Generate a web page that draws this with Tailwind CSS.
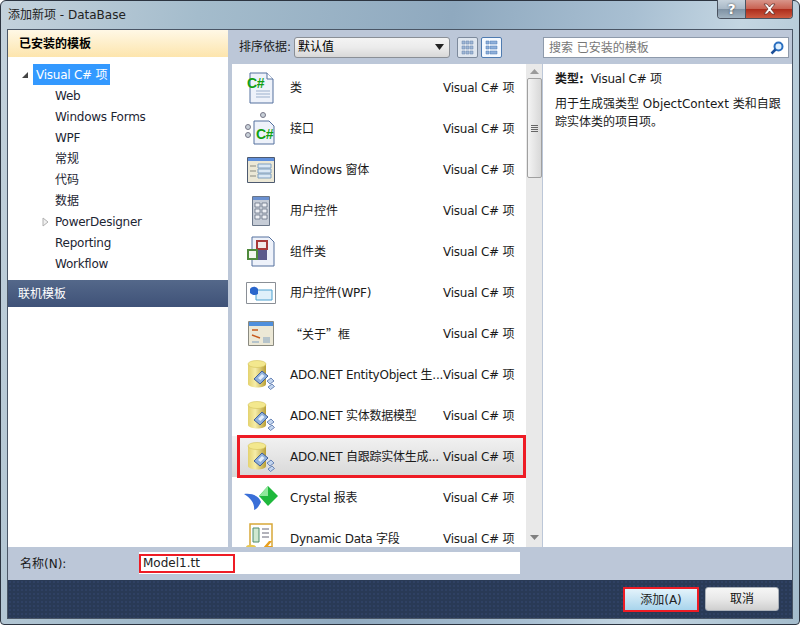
<!DOCTYPE html>
<html lang="zh">
<head>
  <meta charset="UTF-8" />
  <title>添加新项 - DataBase</title>
  <script src="https://cdn.jsdelivr.net/npm/@tailwindcss/browser@4"></script>
</head>
<body class="m-0 overflow-hidden bg-white">

  <svg class="absolute w-0 h-0">
    <defs>
      <linearGradient id="can" x1="0" x2="1" y1="0" y2="0">
        <stop offset="0" stop-color="#e4d26e"/><stop offset=".4" stop-color="#f6eda8"/><stop offset="1" stop-color="#b89e36"/>
      </linearGradient>
    </defs>
    <symbol id="db" viewBox="0 0 32 32">
      <path d="M2 5v20c0 2 4 3.500 9 3.500s9-1.500 9-3.500V5z" fill="url(#can)"/>
      <ellipse cx="11" cy="5" rx="9" ry="3.500" fill="#f3e88e" stroke="#d4c25a" stroke-width=".6"/>
      <path d="M8 20l8-8 6 5-8 8z" fill="#8fb0dc" stroke="#3f5f9c" stroke-width="1"/>
      <path d="M12 19l4-4 2.500 2-4 4z" fill="#e4eefa"/>
      <path d="M21 22l4-3 3 3-4 3zM22 28l4-3 2.500 2.500-4 3z" fill="#c3d5ee" stroke="#4f6fa8" stroke-width=".8"/>
    </symbol>
  </svg>

  <!-- Window -->
  <div class="w-[800px] h-[625px] flex flex-col rounded-t-[6px] rounded-b-[4px] border border-[#2c3440] bg-[linear-gradient(100deg,#c4d2dc_0%,#a4bccc_22%,#8fa9bf_50%,#a8bfd2_70%,#c4d6e2_82%,#a4bccc_100%)] font-['DejaVu_Sans','Noto_Sans_CJK_SC',sans-serif] text-[12px] tracking-[-0.25px] text-[#1a1a1a] relative">

    <!-- Title bar -->
    <div class="h-[28px] flex items-start justify-between pl-[7px] pr-[6px] shrink-0">
      <div class="pt-[5px] leading-[18px] text-[#222] tracking-normal">添加新项 - DataBase</div>
      <div class="flex h-[19px] -mt-px rounded-b-[4px] border border-t-0 border-[#4a5360] overflow-hidden">
        <div class="w-[28px] flex items-center justify-center border-r border-[#4a5360] bg-[linear-gradient(#c6d2dc,#a8b8c6_50%,#7f92a4_52%,#a0b2c0)] text-white font-bold text-[14px] leading-none [text-shadow:0_0_2px_#333]">?</div>
        <div class="w-[46px] flex items-center justify-center bg-[linear-gradient(#d8958a,#c8604f_50%,#ad2d1c_52%,#cc5a40)]">
          <svg width="15" height="12" viewBox="0 0 15 12"><path d="M2 1h3l2.500 3L10 1h3L9 6l4 5h-3L7.500 8 5 11H2l4-5z" fill="#fff" stroke="#5a2a24" stroke-width=".7"/></svg>
        </div>
      </div>
    </div>

    <!-- Dialog client area -->
    <div class="mx-[6px] h-[590px] flex flex-col border border-[#4a5666] bg-[#bcc7d8]">
      <div class="flex h-[517px] shrink-0">

        <!-- Left panel -->
        <div class="w-[220px] shrink-0 bg-white flex flex-col">
          <div class="h-[27px] pl-[11px] flex items-center font-bold text-[12px] tracking-normal bg-[linear-gradient(#fff8e6,#fde5ad)] text-black">已安装的模板</div>
          <div class="h-[223px] pt-[7px] text-[#1d2533]">
            <div class="h-[21px] flex items-center pl-[13px]">
              <svg width="8" height="8" viewBox="0 0 8 8" class="mr-[4px]"><path d="M7 1v6H1z" fill="#444"/></svg>
              <span class="bg-[#3399ff] text-white h-[21px] px-[3px] flex items-center">Visual C# 项</span>
            </div>
            <div class="h-[21px] flex items-center pl-[47px]">Web</div>
            <div class="h-[21px] flex items-center pl-[47px]">Windows Forms</div>
            <div class="h-[21px] flex items-center pl-[47px]">WPF</div>
            <div class="h-[21px] flex items-center pl-[47px] tracking-normal">常规</div>
            <div class="h-[21px] flex items-center pl-[47px] tracking-normal">代码</div>
            <div class="h-[21px] flex items-center pl-[47px] tracking-normal">数据</div>
            <div class="h-[21px] flex items-center pl-[34px]">
              <svg width="7" height="10" viewBox="0 0 7 10" class="mr-[6px]"><path d="M1 1l5 4-5 4z" fill="#f0f0f0" stroke="#b0b0b0"/></svg>
              <span>PowerDesigner</span>
            </div>
            <div class="h-[21px] flex items-center pl-[47px]">Reporting</div>
            <div class="h-[21px] flex items-center pl-[47px]">Workflow</div>
          </div>
          <div class="h-[27px] pl-[10px] flex items-center text-white tracking-normal bg-[linear-gradient(#54688a,#3f5278)]">联机模板</div>
        </div>

        <!-- Middle column -->
        <div class="w-[314px] shrink-0 flex flex-col pl-[4px]">
          <div class="h-[34px] flex items-center shrink-0 pl-[7px] tracking-normal">
            <span class="w-[55px] whitespace-nowrap">排序依据:</span>
            <div class="w-[156px] h-[21px] border border-[#8a8f96] rounded-[3px] bg-[linear-gradient(#f4f4f4,#ebebeb_50%,#d8d8d8)] flex items-center justify-between px-[3px] text-black">
              <span>默认值</span>
              <svg width="9" height="6" viewBox="0 0 9 6" class="mr-[2px]"><path d="M0 0h9L4.500 6z" fill="#222"/></svg>
            </div>
            <div class="ml-[7px] w-[21px] h-[21px] border border-[#7d8a9c] rounded-[2px] bg-[#dfe6ef] flex items-center justify-center">
              <svg width="13" height="15" viewBox="0 0 13 15"><path d="M1 1h3v3H1zM5 1h3v3H5zM9 1h3v3H9zM1 6h3v3H1zM5 6h3v3H5zM9 6h3v3H9zM1 11h3v3H1zM5 11h3v3H5zM9 11h3v3H9z" fill="#9fb6d6" stroke="#6a85ab" stroke-width=".5"/></svg>
            </div>
            <div class="ml-[3px] w-[21px] h-[21px] border border-[#4f7bb0] rounded-[2px] bg-[#f4f9ff] flex items-center justify-center">
              <svg width="13" height="15" viewBox="0 0 13 15"><path d="M1 1h3v3H1zM5 1h7v3H5zM1 6h3v3H1zM5 6h7v3H5zM1 11h3v3H1zM5 11h7v3H5z" fill="#8fb0da" stroke="#4f7bb0" stroke-width=".5"/></svg>
            </div>
          </div>

          <div class="flex flex-1 min-h-0 relative">
            <!-- Template list -->
            <div class="w-[294px] shrink-0 bg-white overflow-hidden pt-[3px]">

              <div class="h-[41px] flex items-center">
                <div class="w-[58px] flex justify-center pl-[2px]"><svg width="30" height="32" viewBox="0 0 30 32"><path d="M3 1h17l6 6v24H3z" fill="#eef2fa" stroke="#54709e"/><path d="M20 1v6h6" fill="#fff" stroke="#54709e"/><path d="M9 19h14M9 22h14M9 25h14" stroke="#9bb0cc"/><text x="0" y="16" font-size="14" font-weight="700" fill="#12a012" font-family="Liberation Sans">C#</text></svg></div>
                <span class="w-[153px]">类</span><span>Visual C# 项</span>
              </div>
              <div class="h-[41px] flex items-center">
                <div class="w-[58px] flex justify-center"><svg width="32" height="34" viewBox="0 0 32 34"><circle cx="18" cy="3" r="2.500" fill="#c8d0d8" stroke="#778"/><circle cx="3" cy="15" r="2.500" fill="#c8d0d8" stroke="#778"/><circle cx="3" cy="23" r="2.500" fill="#c8d0d8" stroke="#778"/><path d="M9 9h15l5 5v18H9z" fill="#eef2fa" stroke="#54709e"/><text x="11" y="27" font-size="14" font-weight="700" fill="#12a012" font-family="Liberation Sans">C#</text></svg></div>
                <span class="w-[153px] tracking-normal">接口</span><span>Visual C# 项</span>
              </div>
              <div class="h-[41px] flex items-center">
                <div class="w-[58px] flex justify-center"><svg width="28" height="26" viewBox="0 0 28 26"><path d="M.5.5h27v25H.5z" fill="#ece8d6" stroke="#4d5a70"/><path d="M1 1h26v3H1z" fill="#5f8fdc"/><path d="M3 9h6M3 14h6M3 19h6" stroke="#8a8a80"/><path d="M11 7h13v4H11zM11 12h13v4H11zM11 17h13v4H11z" fill="#dbe8f4" stroke="#7f9fc0"/></svg></div>
                <span class="w-[153px]">Windows 窗体</span><span>Visual C# 项</span>
              </div>
              <div class="h-[41px] flex items-center">
                <div class="w-[58px] flex justify-center"><svg width="18" height="30" viewBox="0 0 18 30"><path d="M.5.5h17v29H.5z" fill="#c6ccd6" stroke="#6a7688"/><path d="M1 1h16v3H1z" fill="#6a90d0"/><path d="M3 7h5v4H3zM10 7h5v4h-5zM3 13h5v4H3zM10 13h5v4h-5zM3 19h5v4H3zM10 19h5v4h-5z" fill="#eef0f4" stroke="#5a6678" stroke-width=".7"/></svg></div>
                <span class="w-[153px] tracking-normal">用户控件</span><span>Visual C# 项</span>
              </div>
              <div class="h-[41px] flex items-center">
                <div class="w-[58px] flex justify-center"><svg width="28" height="31" viewBox="0 0 28 31"><path d="M5 1h17l5 5v24H5z" fill="#eef2fa" stroke="#54709e"/><path d="M10 5h10v19H10z" fill="#5a5a8c"/><path d="M10 5h10v8h-10z" fill="#f0e8e8" stroke="#a83838" stroke-width="2"/><path d="M1 14h9v9H1z" fill="#f2f6ee" stroke="#4f8a3c" stroke-width="2"/></svg></div>
                <span class="w-[153px] tracking-normal">组件类</span><span>Visual C# 项</span>
              </div>
              <div class="h-[41px] flex items-center">
                <div class="w-[58px] flex justify-center"><svg width="30" height="22" viewBox="0 0 30 22"><path d="M.5.5h29v21H.5z" fill="#fff" stroke="#8a8f96"/><path d="M10 8h16v10H10z" fill="#dff0fa" stroke="#4aa0d0"/><path d="M4 7c2-3 6-3 8 0v5c-3 2-6 1-8-1z" fill="#2a66cc"/></svg></div>
                <span class="w-[153px] whitespace-nowrap">用户控件(WPF)</span><span>Visual C# 项</span>
              </div>
              <div class="h-[41px] flex items-center">
                <div class="w-[58px] flex justify-center"><svg width="26" height="25" viewBox="0 0 26 25"><path d="M.5.5h25v24H.5z" fill="#ece8d6" stroke="#8a8a80"/><path d="M1 1h24v4H1z" fill="#4f8fdc"/><path d="M4 9h6M4 14l8 3" stroke="#c85a1c" stroke-width="1.500"/><path d="M4 21h7M15 17h7M15 19h7M15 21h7" stroke="#7f9fc0"/></svg></div>
                <span class="w-[153px] font-['Noto_Sans_CJK_SC',sans-serif] tracking-normal">“关于”框</span><span>Visual C# 项</span>
              </div>
              <div class="h-[41px] flex items-center">
                <div class="w-[58px] flex justify-center pl-[2px]"><svg width="32" height="32"><use href="#db"/></svg></div>
                <span class="w-[153px] whitespace-nowrap">ADO.NET EntityObject 生...</span><span>Visual C# 项</span>
              </div>
              <div class="h-[41px] flex items-center">
                <div class="w-[58px] flex justify-center pl-[2px]"><svg width="32" height="32"><use href="#db"/></svg></div>
                <span class="w-[153px] whitespace-nowrap">ADO.NET 实体数据模型</span><span>Visual C# 项</span>
              </div>
              <div class="h-[41px] flex items-center bg-[linear-gradient(#f2f2f2,#d8d8d8)] relative">
                <div class="w-[58px] flex justify-center pl-[2px]"><svg width="32" height="32"><use href="#db"/></svg></div>
                <span class="w-[153px] whitespace-nowrap">ADO.NET 自跟踪实体生成...</span><span>Visual C# 项</span>
                <div class="absolute left-[5px] right-0 -top-[1px] -bottom-[1px] border-[3px] border-[#ee1c25]"></div>
              </div>
              <div class="h-[41px] flex items-center">
                <div class="w-[58px] flex justify-center"><svg width="36" height="26" viewBox="0 0 36 26"><path d="M1 9c9-1 15 2 17 8-2 4-4 7-7 8 1-6-3-12-10-16z" fill="#3a6fd8"/><path d="M25 1l10 10-10 10-9-10z" fill="#1fb83c"/><path d="M25 1l-9 10h9z" fill="#8fe89a"/></svg></div>
                <span class="w-[153px]">Crystal 报表</span><span>Visual C# 项</span>
              </div>
              <div class="h-[41px] flex items-center">
                <div class="w-[58px] flex justify-center"><svg width="32" height="32" viewBox="0 0 32 32"><path d="M5 1h22v24H5z" fill="#fff" stroke="#d8a838" stroke-width="1.500"/><path d="M8 5h6v14H8z" fill="#cfe8d0" stroke="#4f8a6c"/><path d="M17 6h7M17 10h7M17 14h7" stroke="#667"/><path d="M1 24c0-3 10-3 10 0v7H1z" fill="#e8c850"/><path d="M24 18l-7 8h5l-3 6 9-9h-5l4-5z" fill="#e8a020"/></svg></div>
                <span class="w-[153px] whitespace-nowrap">Dynamic Data 字段</span><span>Visual C# 项</span>
              </div>
            </div>

            <!-- Scrollbar -->
            <div class="w-[16px] shrink-0 bg-[#e9e9e9] flex flex-col items-center pt-[5px]">
              <svg width="9" height="5" viewBox="0 0 9 5" class="shrink-0"><path d="M4.500 0L9 5H0z" fill="#9a9a9a"/></svg>
              <div class="mt-[4px] w-[15px] h-[100px] shrink-0 rounded-[2px] border border-[#a0a0a0] bg-[linear-gradient(90deg,#f4f4f4,#d8d8d8)] flex flex-col items-center justify-center gap-[1px]">
                <div class="w-[7px] h-px bg-[#666]"></div><div class="w-[7px] h-px bg-[#666]"></div><div class="w-[7px] h-px bg-[#666]"></div><div class="w-[7px] h-px bg-[#666]"></div>
              </div>
              <svg width="9" height="5" viewBox="0 0 9 5" class="shrink-0 mt-auto mb-[7px]"><path d="M0 0h9L4.500 5z" fill="#808080"/></svg>
            </div>
          </div>
        </div>

        <!-- Right column -->
        <div class="flex-1 min-w-0 flex flex-col pl-px">
          <div class="h-[34px] shrink-0 pt-[7px]">
            <div class="w-[246px] h-[21px] border border-[#8e9aab] bg-white flex items-center justify-between pl-[5px] pr-[4px] text-[#777] tracking-normal">
              <span>搜索 已安装的模板</span>
              <svg width="14" height="14" viewBox="0 0 14 14"><circle cx="8.500" cy="5.500" r="4" fill="#dff0ff" stroke="#2a6fc0" stroke-width="2"/><path d="M5.500 8.500L1.500 12.500" stroke="#1c4f98" stroke-width="2.500"/></svg>
            </div>
          </div>
          <div class="flex-1 bg-white px-[12px] pt-[7px] text-[#1a1a1a] tracking-normal">
            <div class="h-[17px] leading-[17px]"><b>类型:</b> <span class="ml-[3px] tracking-[-0.25px]">Visual C# 项</span></div>
            <div class="mt-[7px] leading-[18px] w-[226px]">用于生成强类型 ObjectContext 类和自跟踪实体类的项目项。</div>
          </div>
        </div>
      </div>

      <!-- Name row -->
      <div class="h-[33px] shrink-0 flex items-center pl-[12px] tracking-normal">
        <span class="w-[119px]">名称(N):</span>
        <div class="w-[381px] h-[22px] bg-white flex items-center relative -mt-[1px]">
          <div class="w-[96px] h-[19px] border-2 border-[#ee1c25] pl-[2px] flex items-center text-[#222] text-[12px]">Model1.tt</div>
        </div>
      </div>

      <!-- Footer -->
      <div class="flex-1 flex items-start justify-end pr-[13px] pt-[7px] tracking-normal bg-[#293a56] bg-[radial-gradient(#2f4163_1px,transparent_1px)] bg-[length:4px_4px]">
        <div class="w-[76px] h-[25px] border-2 border-[#ee1c25] bg-[linear-gradient(#e4f3fb,#a8d4ec)] flex items-center justify-center text-[#222]">添加(A)</div>
        <div class="ml-[6px] w-[74px] h-[24px] border border-[#aab0b8] rounded-[3px] bg-[linear-gradient(#f6f6f6,#e8e8e8_50%,#cfcfcf)] flex items-center justify-center text-[#111]">取消</div>
      </div>
    </div>
  </div>

</body>
</html>
